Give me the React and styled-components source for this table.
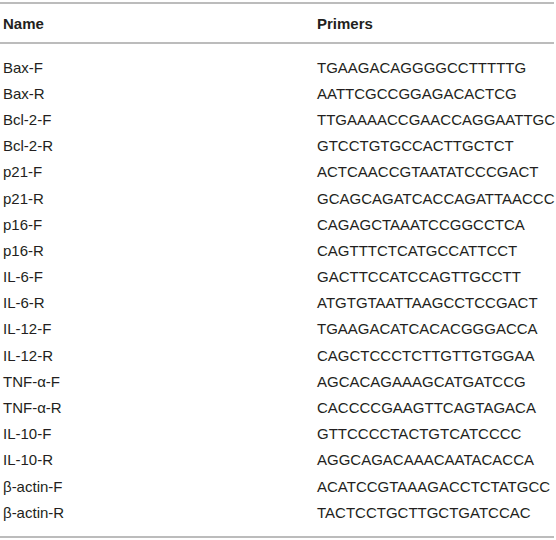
import styled, { createGlobalStyle } from "styled-components";

const GlobalStyle = createGlobalStyle`
  html, body {
    margin: 0;
    padding: 0;
    background: #ffffff;
  }
`;

const Table = styled.div`
  width: 554px;
  margin-top: 2px;
  font-family: "Liberation Sans", Arial, sans-serif;
  color: #231f20;
  border-top: 2px solid #bcbcbc;
  border-bottom: 2px solid #bcbcbc;
`;

const Head = styled.div`
  display: grid;
  grid-template-columns: 317px 1fr;
  height: 38px;
  align-items: center;
  border-bottom: 2px solid #bcbcbc;
  font-weight: bold;
  font-size: 15px;
`;

const Body = styled.div`
  padding: 10px 0 11px;
`;

const Row = styled.div`
  display: grid;
  grid-template-columns: 317px 1fr;
  height: 26.2px;
  align-items: center;
  font-size: 15px;
`;

const Cell = styled.div`
  padding-left: 3px;
  white-space: nowrap;

  & + & {
    padding-left: 0;
  }
`;

const primers = [
  ["Bax-F", "TGAAGACAGGGGCCTTTTTG"],
  ["Bax-R", "AATTCGCCGGAGACACTCG"],
  ["Bcl-2-F", "TTGAAAACCGAACCAGGAATTGC"],
  ["Bcl-2-R", "GTCCTGTGCCACTTGCTCT"],
  ["p21-F", "ACTCAACCGTAATATCCCGACT"],
  ["p21-R", "GCAGCAGATCACCAGATTAACCC"],
  ["p16-F", "CAGAGCTAAATCCGGCCTCA"],
  ["p16-R", "CAGTTTCTCATGCCATTCCT"],
  ["IL-6-F", "GACTTCCATCCAGTTGCCTT"],
  ["IL-6-R", "ATGTGTAATTAAGCCTCCGACT"],
  ["IL-12-F", "TGAAGACATCACACGGGACCA"],
  ["IL-12-R", "CAGCTCCCTCTTGTTGTGGAA"],
  ["TNF-α-F", "AGCACAGAAAGCATGATCCG"],
  ["TNF-α-R", "CACCCCGAAGTTCAGTAGACA"],
  ["IL-10-F", "GTTCCCCTACTGTCATCCCC"],
  ["IL-10-R", "AGGCAGACAAACAATACACCA"],
  ["β-actin-F", "ACATCCGTAAAGACCTCTATGCC"],
  ["β-actin-R", "TACTCCTGCTTGCTGATCCAC"],
];

function App() {
  return (
    <>
      <GlobalStyle />
      <Table>
        <Head>
          <Cell>Name</Cell>
          <Cell>Primers</Cell>
        </Head>
        <Body>
          {primers.map(([name, seq]) => (
            <Row key={name}>
              <Cell>{name}</Cell>
              <Cell>{seq}</Cell>
            </Row>
          ))}
        </Body>
      </Table>
    </>
  );
}

export default App;
